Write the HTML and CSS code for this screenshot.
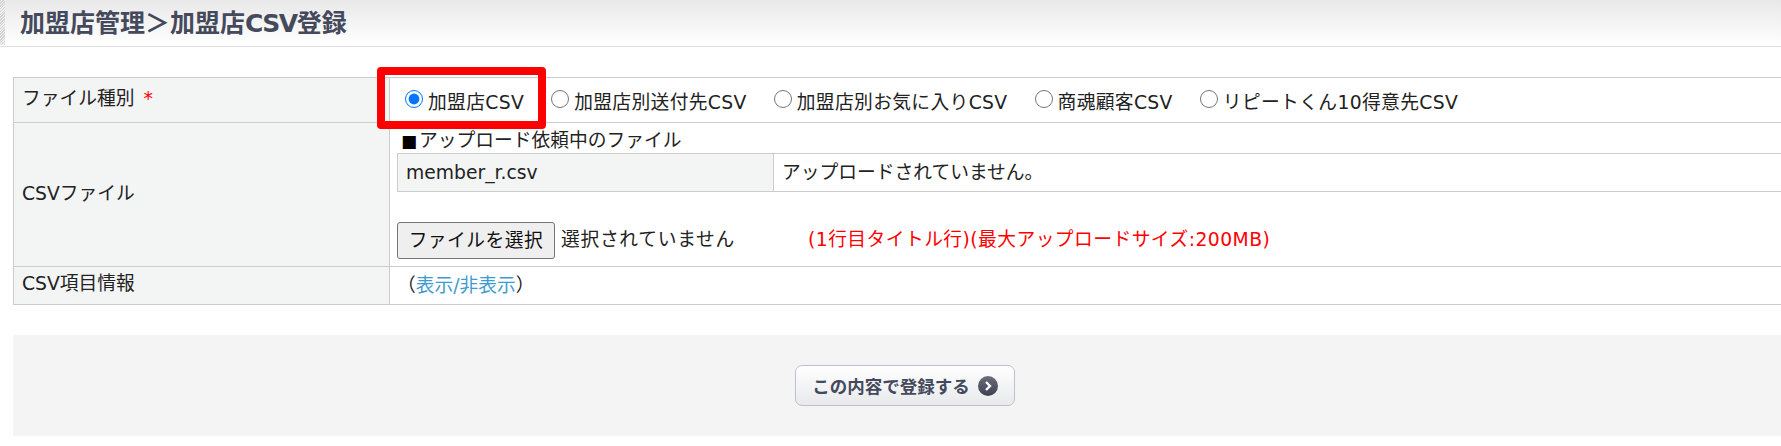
FILE: index.html
```html
<!DOCTYPE html>
<html lang="ja">
<head>
    <meta charset="UTF-8">
    <title>加盟店CSV登録</title>
    <link rel="stylesheet" href="styles.css">
</head>
<body>
    <div class="page-header">
        <h1>加盟店管理＞加盟店<span class="latin">CSV</span>登録</h1>
    </div>

    <div class="form-area">
        <table class="form-table">
            <tr class="row-type">
                <th>ファイル種別 <span class="required">*</span></th>
                <td>
                    <div class="radio-group">
                        <label><input type="radio" name="file_type" checked>加盟店CSV</label>
                        <label><input type="radio" name="file_type">加盟店別送付先CSV</label>
                        <label><input type="radio" name="file_type">加盟店別お気に入りCSV</label>
                        <label><input type="radio" name="file_type">商魂顧客CSV</label>
                        <label><input type="radio" name="file_type">リピートくん10得意先CSV</label>
                    </div>
                </td>
            </tr>
            <tr class="row-file">
                <th>CSVファイル</th>
                <td>
                    <div class="pending-title"><span class="square">■</span>アップロード依頼中のファイル</div>
                    <table class="pending-table">
                        <tr>
                            <th>member_r.csv</th>
                            <td>アップロードされていません。</td>
                        </tr>
                    </table>
                    <div class="file-line">
                        <button type="button" class="file-btn">ファイルを選択</button>
                        <span class="file-name">選択されていません</span>
                        <span class="file-note">(1行目タイトル行)(最大アップロードサイズ:200MB)</span>
                    </div>
                </td>
            </tr>
            <tr class="row-info">
                <th>CSV項目情報</th>
                <td>（<a href="#">表示/非表示</a>）</td>
            </tr>
        </table>
        <!-- Red annotation around the selected radio -->
        <div class="callout"></div>
    </div>

    <div class="submit-area">
        <button type="button" class="submit-btn">
            この内容で登録する
            <svg class="submit-icon" width="20" height="20" viewBox="0 0 20 20">
                <defs>
                    <linearGradient id="iconFill" x1="0" y1="0" x2="0" y2="1">
                        <stop offset="0" stop-color="#6b6e7c"/>
                        <stop offset="1" stop-color="#3c3f50"/>
                    </linearGradient>
                </defs>
                <circle cx="10" cy="10" r="10" fill="url(#iconFill)"/>
                <path d="M8 6l4 4-4 4" fill="none" stroke="#fff" stroke-width="2.4"/>
            </svg>
        </button>
    </div>
</body>
</html>
```

FILE: styles.css
```css
/* Reset styles */
* {
    margin: 0;
    padding: 0;
    box-sizing: border-box;
}

body {
    background-color: #ffffff;
    color: #222222;
    font-family: "DejaVu Sans", "Noto Sans CJK JP", sans-serif;
    font-size: 18.75px;
    line-height: 28px;
    overflow-x: hidden;
}

/* Page title */
.page-header {
    height: 47px;
    padding-left: 20px;
    display: flex;
    align-items: center;
    border-bottom: 1px solid #dddddd;
    background: linear-gradient(#e8e8e8, #ffffff);
    position: relative;
}

.page-header::before {
    content: "";
    position: absolute;
    left: 0;
    top: 0;
    width: 5px;
    height: 45px;
    background: repeating-linear-gradient(135deg, #d4d4d4 0, #d4d4d4 1px, #eeeeee 1px, #eeeeee 2px);
}

.page-header h1 {
    font-size: 25px;
    font-weight: 700;
    color: #444a5c;
    line-height: 1;
}

.latin {
    letter-spacing: -1.5px;
}

/* Form table */
.form-area {
    position: relative;
    padding: 30px 0 0 13px;
}

.form-table,
.pending-table {
    border-collapse: collapse;
    table-layout: fixed;
}

.form-table {
    width: 1788px;
}

.form-table th,
.form-table td,
.pending-table th,
.pending-table td {
    border: 1px solid #cccccc;
    font-weight: 400;
    text-align: left;
}

.form-table > tbody > tr > th {
    width: 376px;
    padding: 0 0 2px 8px;
    background-color: #f3f4f4;
}

.form-table > tbody > tr > td {
    padding-left: 7px;
}

.row-type {
    height: 45px;
}

.row-file {
    height: 144px;
}

.row-file > td {
    vertical-align: top;
}

.row-info {
    height: 38px;
}

.form-table > tbody > .row-info > th {
    padding-bottom: 3px;
}

.required {
    color: #ff0000;
    margin-left: 3px;
}

.radio-group {
    display: flex;
    gap: 27px;
    padding: 5px 0 0 8px;
    line-height: 28px;
    letter-spacing: 0.35px;
}

.radio-group label {
    display: flex;
    align-items: center;
    white-space: nowrap;
}

.radio-group input {
    width: 18px;
    height: 18px;
    margin: -7px 5px 0 0;
    accent-color: #0075ff;
}

/* Pending upload block */
.pending-title {
    height: 30px;
    line-height: 36px;
    padding-left: 4px;
    white-space: nowrap;
}

.square {
    color: #000000;
    font-size: 17px;
    margin-right: 2px;
}

.pending-table {
    width: 1400px;
}

.pending-table tr {
    height: 38px;
}

.pending-table th {
    width: 376px;
    padding-left: 8px;
    background-color: #f3f4f4;
}

.pending-table td {
    padding-left: 8px;
}

.file-line {
    display: flex;
    align-items: center;
    margin-top: 30px;
}

.file-btn {
    width: 158px;
    height: 37px;
    padding-bottom: 4px;
    border: 1px solid #767676;
    border-radius: 3px;
    background-color: #efefef;
    color: #111111;
    font-family: inherit;
    font-size: 18.75px;
    letter-spacing: 0.5px;
    cursor: pointer;
}

.file-name {
    margin: -2px 0 0 6px;
    width: 247px;
    letter-spacing: 0.7px;
}

.file-note {
    margin-top: -2px;
    color: #ff0000;
    letter-spacing: 0.45px;
    white-space: nowrap;
}

.row-info a {
    color: #3d9bd0;
    text-decoration: none;
}

.callout {
    position: absolute;
    left: 377px;
    top: 20px;
    width: 169px;
    height: 62px;
    border: 8px solid #ff0000;
    border-radius: 4px;
}

/* Submit bar */
.submit-area {
    margin: 30px 0 0 13px;
    height: 101px;
    display: flex;
    justify-content: center;
    align-items: center;
    background-color: #f4f4f4;
    padding-left: 16px;
}

.submit-btn {
    width: 220px;
    height: 41px;
    display: flex;
    justify-content: center;
    align-items: center;
    gap: 8px;
    border: 1px solid #c0bfd0;
    border-radius: 7px;
    background: linear-gradient(#ffffff, #e8e9eb);
    color: #444a5c;
    font-family: "Noto Sans CJK JP", sans-serif;
    font-size: 17.5px;
    font-weight: 700;
    cursor: pointer;
}
```
